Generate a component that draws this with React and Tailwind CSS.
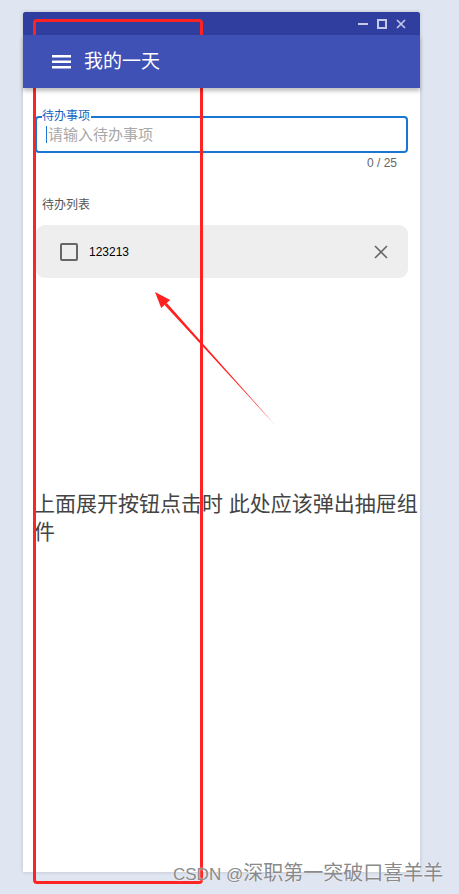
import React from "react";

export default function App() {
  return (
    <div
      className="relative w-[459px] h-[894px] overflow-hidden bg-[#dfe5f1] pt-[12px]"
      style={{ fontFamily: '"Liberation Sans", "Noto Sans CJK SC", sans-serif' }}
    >
      {/* window */}
      <div className="ml-[23px] w-[397px] h-[860px] bg-white shadow-[0_0_4px_rgba(0,0,0,0.15)] flex flex-col">
        {/* title bar */}
        <div className="h-[23px] bg-[#303f9f] flex items-center justify-end gap-[9px] pr-[14px] rounded-t-[2px]">
          <div className="w-[10px] h-[2px] bg-[#c5cae9]" />
          <div className="w-[10px] h-[10px] border-2 border-[#c5cae9]" />
          <svg width="10" height="10" viewBox="0 0 10 10">
            <path d="M1 1L9 9M9 1L1 9" stroke="#c5cae9" strokeWidth="1.6" />
          </svg>
        </div>
        {/* header */}
        <div className="h-[53px] bg-[#3f51b5] flex items-center pl-[29px] shadow-[0_3px_4px_rgba(0,0,0,0.25)] relative z-10">
          <svg width="19" height="14" viewBox="0 0 19 14" className="mr-[13px]">
            <rect x="0" y="0" width="19" height="2.5" fill="white" />
            <rect x="0" y="5.5" width="19" height="2.5" fill="white" />
            <rect x="0" y="11" width="19" height="2.5" fill="white" />
          </svg>
          <span className="text-white text-[19px] leading-none">我的一天</span>
        </div>
        {/* content */}
        <div className="px-[12px] pt-[28px]">
          <div className="relative h-[37px] border-2 border-[#1976d2] rounded-[4px] flex items-center pl-[9px]">
            <span className="absolute -top-[9px] left-[5px] bg-white pr-[1px] text-[12px] leading-[14px] text-[#1565c0]">
              待办事项
            </span>
            <span className="w-[1px] h-[17px] bg-[#1976d2] mr-[1px]" />
            <span className="text-[15px] text-[#a8a8a8] leading-none">请输入待办事项</span>
          </div>
          <div className="flex justify-end pr-[11px] mt-[3px] text-[12px] leading-[14px] text-[#666]">0 / 25</div>
          <div className="mt-[28px] pl-[7px] text-[12px] leading-[14px] text-[#555]">待办列表</div>
          <div className="mt-[13px] ml-[1px] h-[53px] bg-[#eeeeee] rounded-[9px] flex items-center pl-[24px] pr-[20px]">
            <div className="w-[18px] h-[18px] border-2 border-[#666] rounded-[2px]" />
            <span className="ml-[11px] text-[12px] text-black leading-none">123213</span>
            <svg width="14" height="14" viewBox="0 0 14 14" className="ml-auto">
              <path d="M1 1L13 13M13 1L1 13" stroke="#666" strokeWidth="1.6" />
            </svg>
          </div>
          <div className="mt-[212px] -ml-[1px] -mr-[12px] text-[21px] leading-[28px] text-[#444]">
            上面展开按钮点击时 此处应该弹出抽屉组件
          </div>
        </div>
      </div>

      {/* annotation box */}
      <div className="absolute left-[33px] top-[19px] w-[170px] h-[865px] border-[3px] border-[#ff2424] rounded-[4px] pointer-events-none" />

      {/* annotation arrow */}
      <svg className="absolute left-0 top-0 pointer-events-none" width="459" height="894" viewBox="0 0 459 894">
        <polygon points="166.8,302.9 164.6,304.9 275,425" fill="#ff2020" />
        <polygon points="155,292 170.2,299.9 165.7,303.9 161.2,307.9" fill="#ff2020" />
      </svg>

      {/* watermark */}
      <div
        className="absolute left-[173px] top-[861px] flex items-baseline leading-[24px] text-[#8a8a8a] whitespace-nowrap"
        style={{ textShadow: "0 0 2px #fff" }}
      >
        <span className="text-[17px]">CSDN @</span>
        <span className="text-[20px]">深职第一突破口喜羊羊</span>
      </div>
    </div>
  );
}
